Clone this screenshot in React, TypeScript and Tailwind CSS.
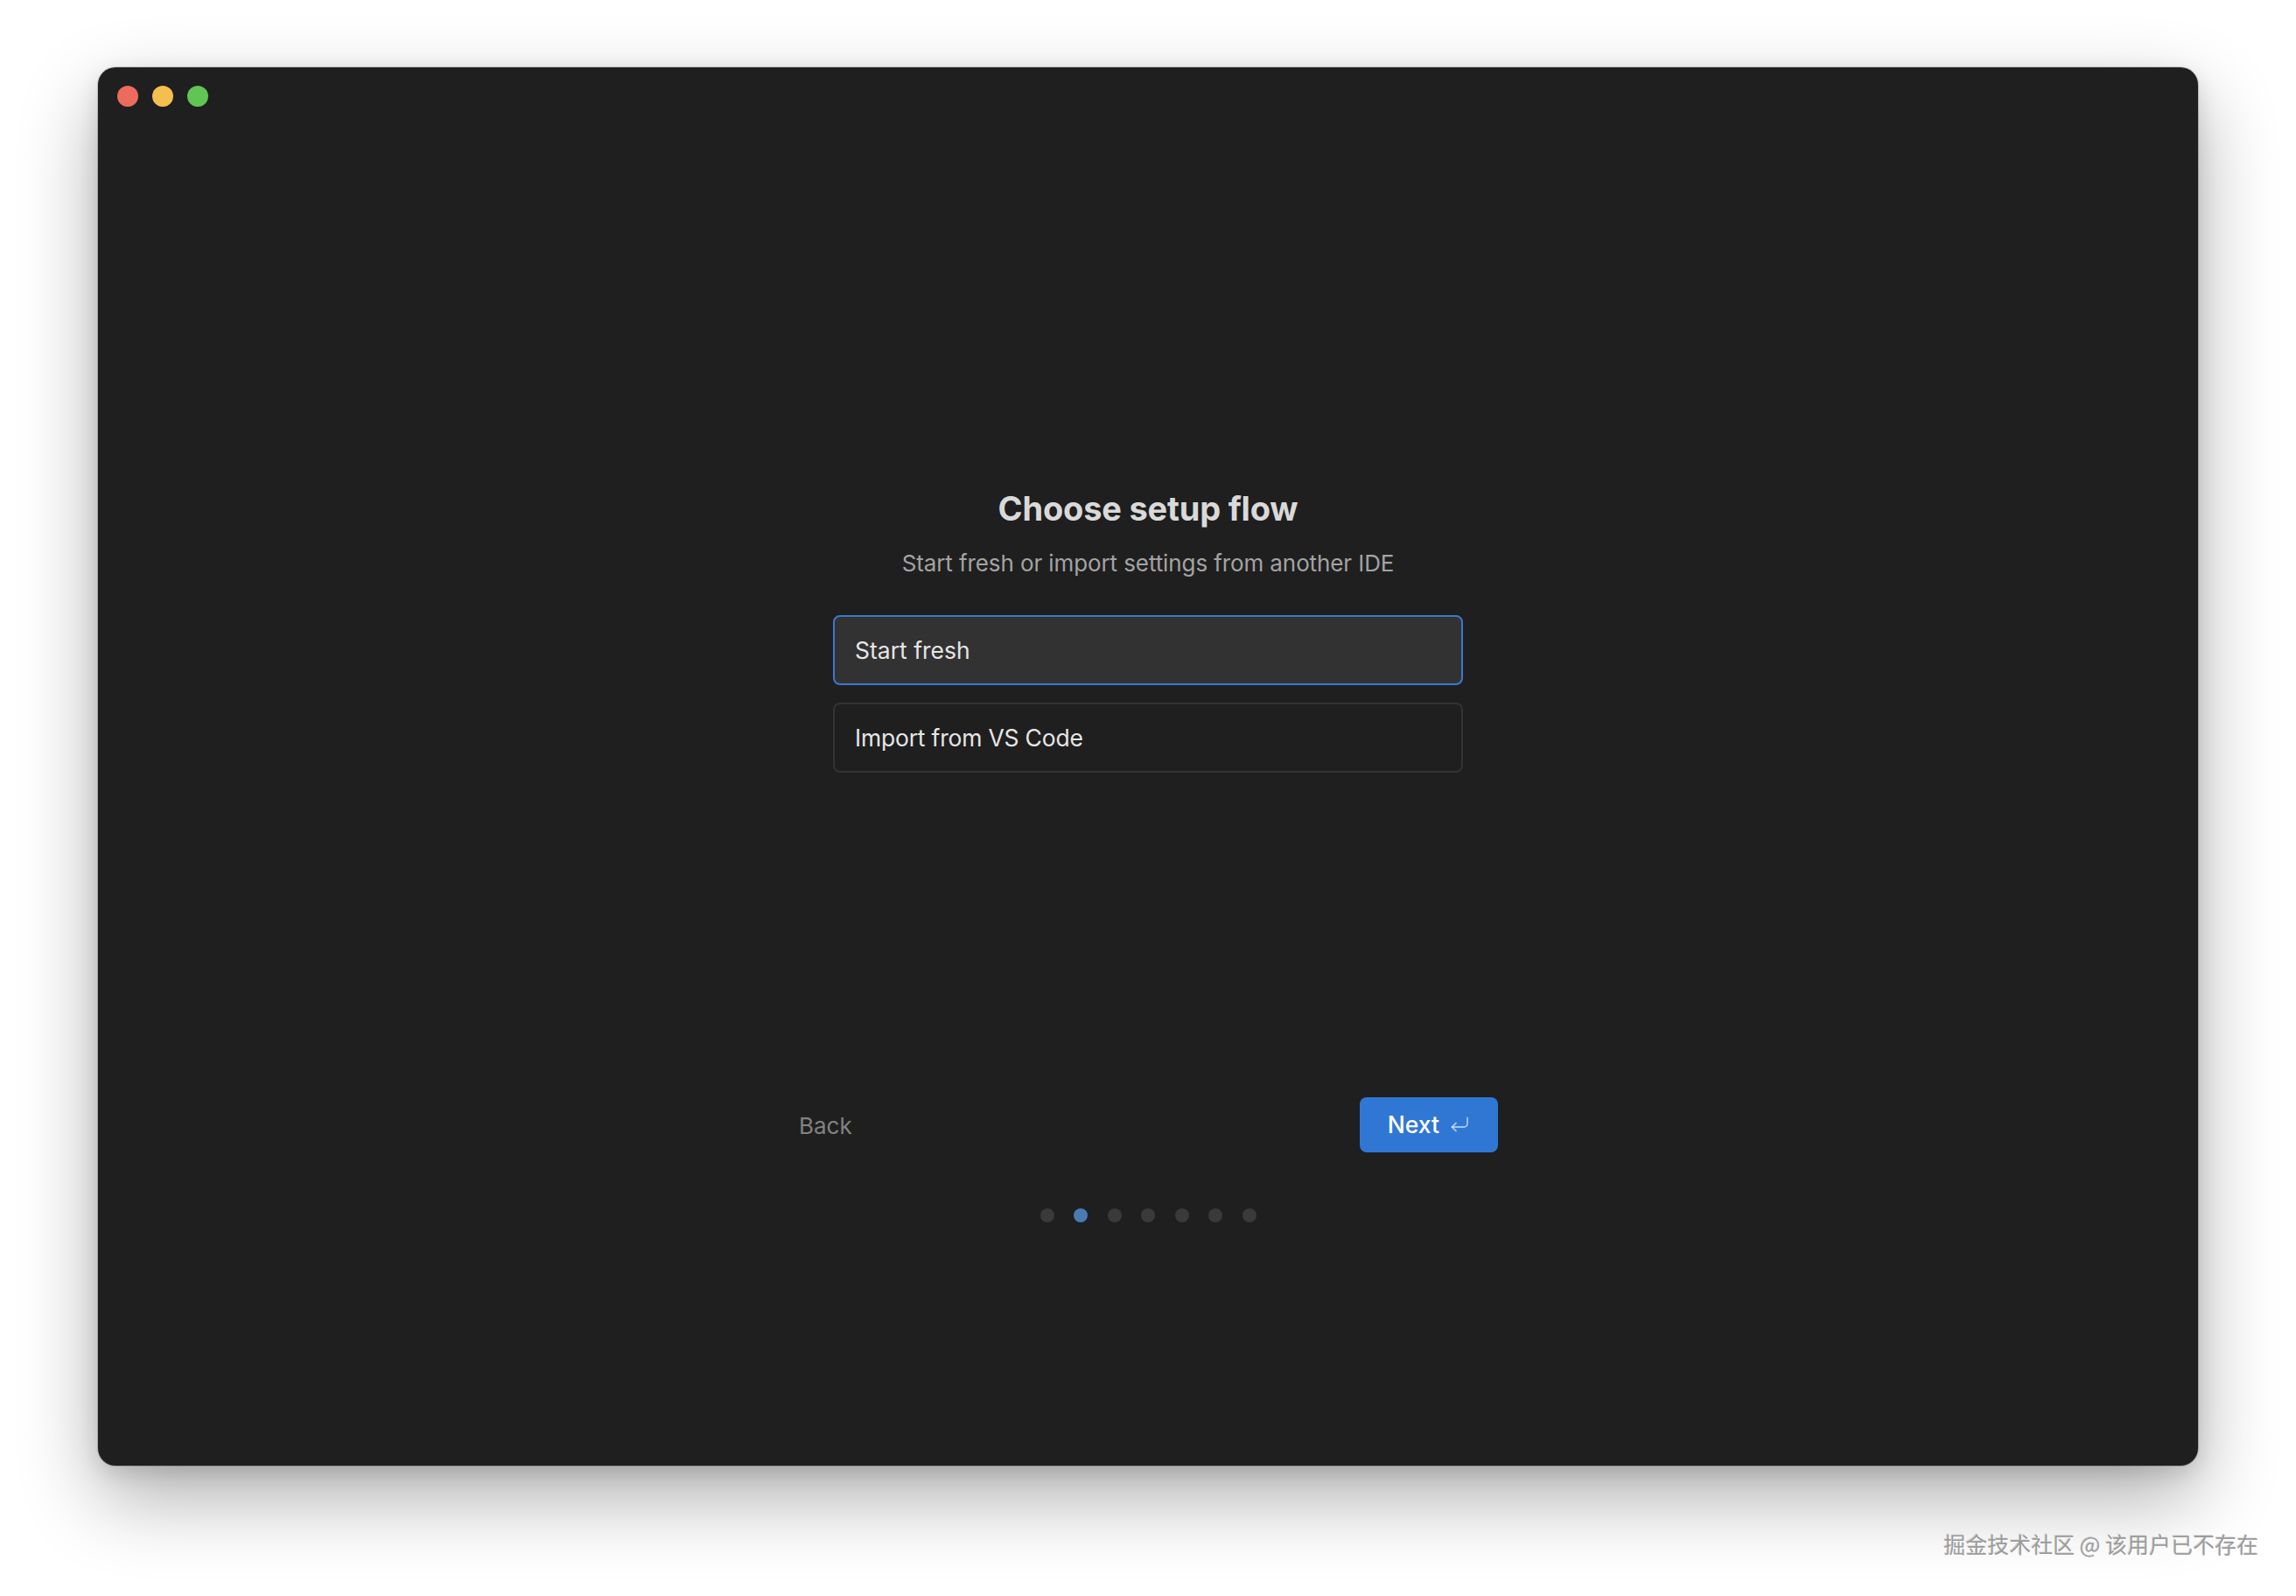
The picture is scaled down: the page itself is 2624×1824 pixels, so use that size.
const steps = [0, 1, 2, 3, 4, 5, 6];

const ReturnIcon = () => (
  <svg width="22" height="19" viewBox="0 0 22 19" fill="none" className="text-white/55">
    <path d="M20 1.5v6.5a4 4 0 0 1-4 4H2.5" stroke="currentColor" strokeWidth="1.8" strokeLinecap="round" strokeLinejoin="round" />
    <path d="M7 7.5 2.5 12 7 16.5" stroke="currentColor" strokeWidth="1.8" strokeLinecap="round" strokeLinejoin="round" />
  </svg>
);

const App = () => {
  const current = 1;

  return (
    <div className="min-h-screen w-full bg-white relative overflow-hidden font-['Inter','Noto_Sans',sans-serif]">
      {/* Window */}
      <div className="mx-auto mt-[77px] w-[2400px] h-[1598px] rounded-[20px] bg-[#1f1f1f] flex flex-col shadow-[0_0_0_1px_rgba(0,0,0,0.18),0_36px_90px_rgba(0,0,0,0.32),0_8px_24px_rgba(0,0,0,0.12)]">
        {/* Title bar */}
        <div className="flex gap-4 px-[22px] pt-[21px]">
          <span className="w-6 h-6 rounded-full bg-[#ec6a5e]" />
          <span className="w-6 h-6 rounded-full bg-[#f4bf4f]" />
          <span className="w-6 h-6 rounded-full bg-[#61c554]" />
        </div>

        {/* Content */}
        <div className="flex flex-col items-center pt-[436px]">
          <h1 className="text-[38px] leading-[46px] font-bold text-[#d9d9d9] tracking-[-0.2px]">
            Choose setup flow
          </h1>
          <p className="mt-[22px] text-[26px] leading-[36px] text-[#a3a3a3] tracking-[-0.1px]">
            Start fresh or import settings from another IDE
          </p>

          <div className="mt-[41px] w-[720px] flex flex-col gap-5">
            <button className="h-20 w-full rounded-lg border-2 border-[#3a78cf] bg-[#323232] px-[23px] pt-[2px] text-left text-[26.5px] text-[#e6e6e6]">
              Start fresh
            </button>
            <button className="h-20 w-full rounded-lg border-2 border-[#333333] bg-[#1f1f1f] px-[23px] pt-[2px] text-left text-[26.5px] text-[#e6e6e6] tracking-[-0.2px]">
              Import from VS Code
            </button>
          </div>

          {/* Footer nav */}
          <div className="mt-[371px] w-[800px] flex items-center justify-between">
            <button className="text-[26px] text-[#828282] pl-[1px] pt-[2px]">Back</button>
            <button className="h-[63px] rounded-lg bg-[#3077d4] pl-[32px] pr-[33px] flex items-center gap-3 text-[26.5px] font-medium text-white">
              <span className="pt-[1px]">Next</span>
              <ReturnIcon />
            </button>
          </div>

          {/* Progress dots */}
          <div className="mt-[64px] flex gap-[22.5px]">
            {steps.map((s) => (
              <span
                key={s}
                className={s === current ? 'w-4 h-4 rounded-full bg-[#4a7ab4]' : 'w-4 h-4 rounded-full bg-[#3a3a3a]'}
              />
            ))}
          </div>
        </div>
      </div>

      {/* Watermark */}
      <div className="absolute right-[43px] bottom-[41px] text-[25px] text-[#9c9c9c] font-['Noto_Sans_CJK_SC',sans-serif] [text-shadow:1px_1px_0_rgba(255,255,255,0.9),-1px_-1px_0_rgba(0,0,0,0.15)]">
        掘金技术社区 @ 该用户已不存在
      </div>
    </div>
  );
};

export default App;
